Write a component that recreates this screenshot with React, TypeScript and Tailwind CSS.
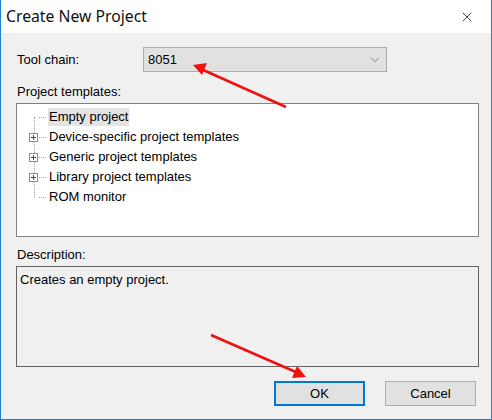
import React from "react";
import { X, ChevronDown } from "lucide-react";

const font = { fontFamily: '"Liberation Sans", Arial, sans-serif' };

const PlusBox = () => (
  <span className="w-[9px] h-[9px] border border-[#919191] bg-white flex items-center justify-center">
    <svg width="7" height="7" viewBox="0 0 7 7">
      <path d="M1 3.5h5M3.5 1v5" stroke="#2a4b8c" strokeWidth="1" />
    </svg>
  </span>
);

const TreeRow = ({ label, plus, selected }: { label: string; plus?: boolean; selected?: boolean }) => (
  <div className="h-5 flex items-center">
    <div className="w-[31px] flex items-center">
      <span className="w-[9px] h-[9px] ml-[12px] flex items-center justify-center">
        {plus ? <PlusBox /> : null}
      </span>
      <span className="flex-1 h-0 border-t border-dotted border-[#a0a0a0] ml-[1px] mr-[2px]" />
    </div>
    <span className={`px-[1px] leading-[18px] ${selected ? "bg-[#e3e3e3]" : ""}`}>{label}</span>
  </div>
);

export default function App() {
  return (
    <div className="relative w-[492px] h-[420px] bg-[#f0f0f0] border-x border-b border-[#1883d7] text-[13px] text-black overflow-hidden" style={font}>
      {/* Title bar */}
      <div className="h-[33px] bg-white flex items-center justify-between pl-[5px] pr-[16px]">
        <span className="text-[15.75px] text-[#111]" style={{ fontFamily: '"Noto Sans", "Open Sans", sans-serif' }}>Create New Project</span>
        <X className="w-[16px] h-[16px] text-black" strokeWidth={1.1} />
      </div>

      <div className="px-[15px] pt-[14px]">
        {/* Tool chain */}
        <div className="flex items-center h-[25px]">
          <span className="w-[127px] pl-[1px]">Tool chain:</span>
          <div className="w-[244px] h-[25px] bg-[#e1e1e1] border border-[#adadad] flex items-center justify-between pl-[4px] pr-[4px]">
            <span>8051</span>
            <ChevronDown className="w-[14px] h-[14px] text-[#666]" strokeWidth={1.3} />
          </div>
        </div>

        <div className="mt-[12px] pl-[1px] h-[15px] leading-[15px]">Project templates:</div>

        {/* Tree */}
        <div className="mt-[4px] w-[463px] h-[134px] bg-white border border-[#828282] relative pt-[3px]">
          <div className="absolute left-[17px] top-[13px] h-[80px] border-l border-dotted border-[#a0a0a0]" />
          <div className="relative">
            <TreeRow label="Empty project" selected />
            <TreeRow label="Device-specific project templates" plus />
            <TreeRow label="Generic project templates" plus />
            <TreeRow label="Library project templates" plus />
            <TreeRow label="ROM monitor" />
          </div>
        </div>

        <div className="mt-[10px] pl-[1px] h-[15px] leading-[15px]">Description:</div>

        {/* Description */}
        <div className="mt-[4px] w-[463px] h-[101px] border border-[#646464] px-[3px] pt-[3px]">
          Creates an empty project.
        </div>

        {/* Buttons */}
        <div className="mt-[14px] flex justify-end gap-[20px]">
          <button className="w-[91px] h-[25px] bg-[#e1e1e1] border-2 border-[#0078d7] flex items-center justify-center">OK</button>
          <button className="w-[91px] h-[25px] bg-[#e1e1e1] border border-[#adadad] flex items-center justify-center">Cancel</button>
        </div>
      </div>

      {/* Annotation arrows */}
      <svg className="absolute inset-0 pointer-events-none" width="492" height="420">
        <line x1="285" y1="107" x2="200" y2="69" stroke="#f01010" strokeWidth="2.5" />
        <path d="M192 65 L206 63 L201 75 Z" fill="#f01010" />
        <line x1="210" y1="335" x2="297" y2="373" stroke="#f01010" strokeWidth="2.5" />
        <path d="M305 377 L291 378 L296 366 Z" fill="#f01010" />
      </svg>
    </div>
  );
}
